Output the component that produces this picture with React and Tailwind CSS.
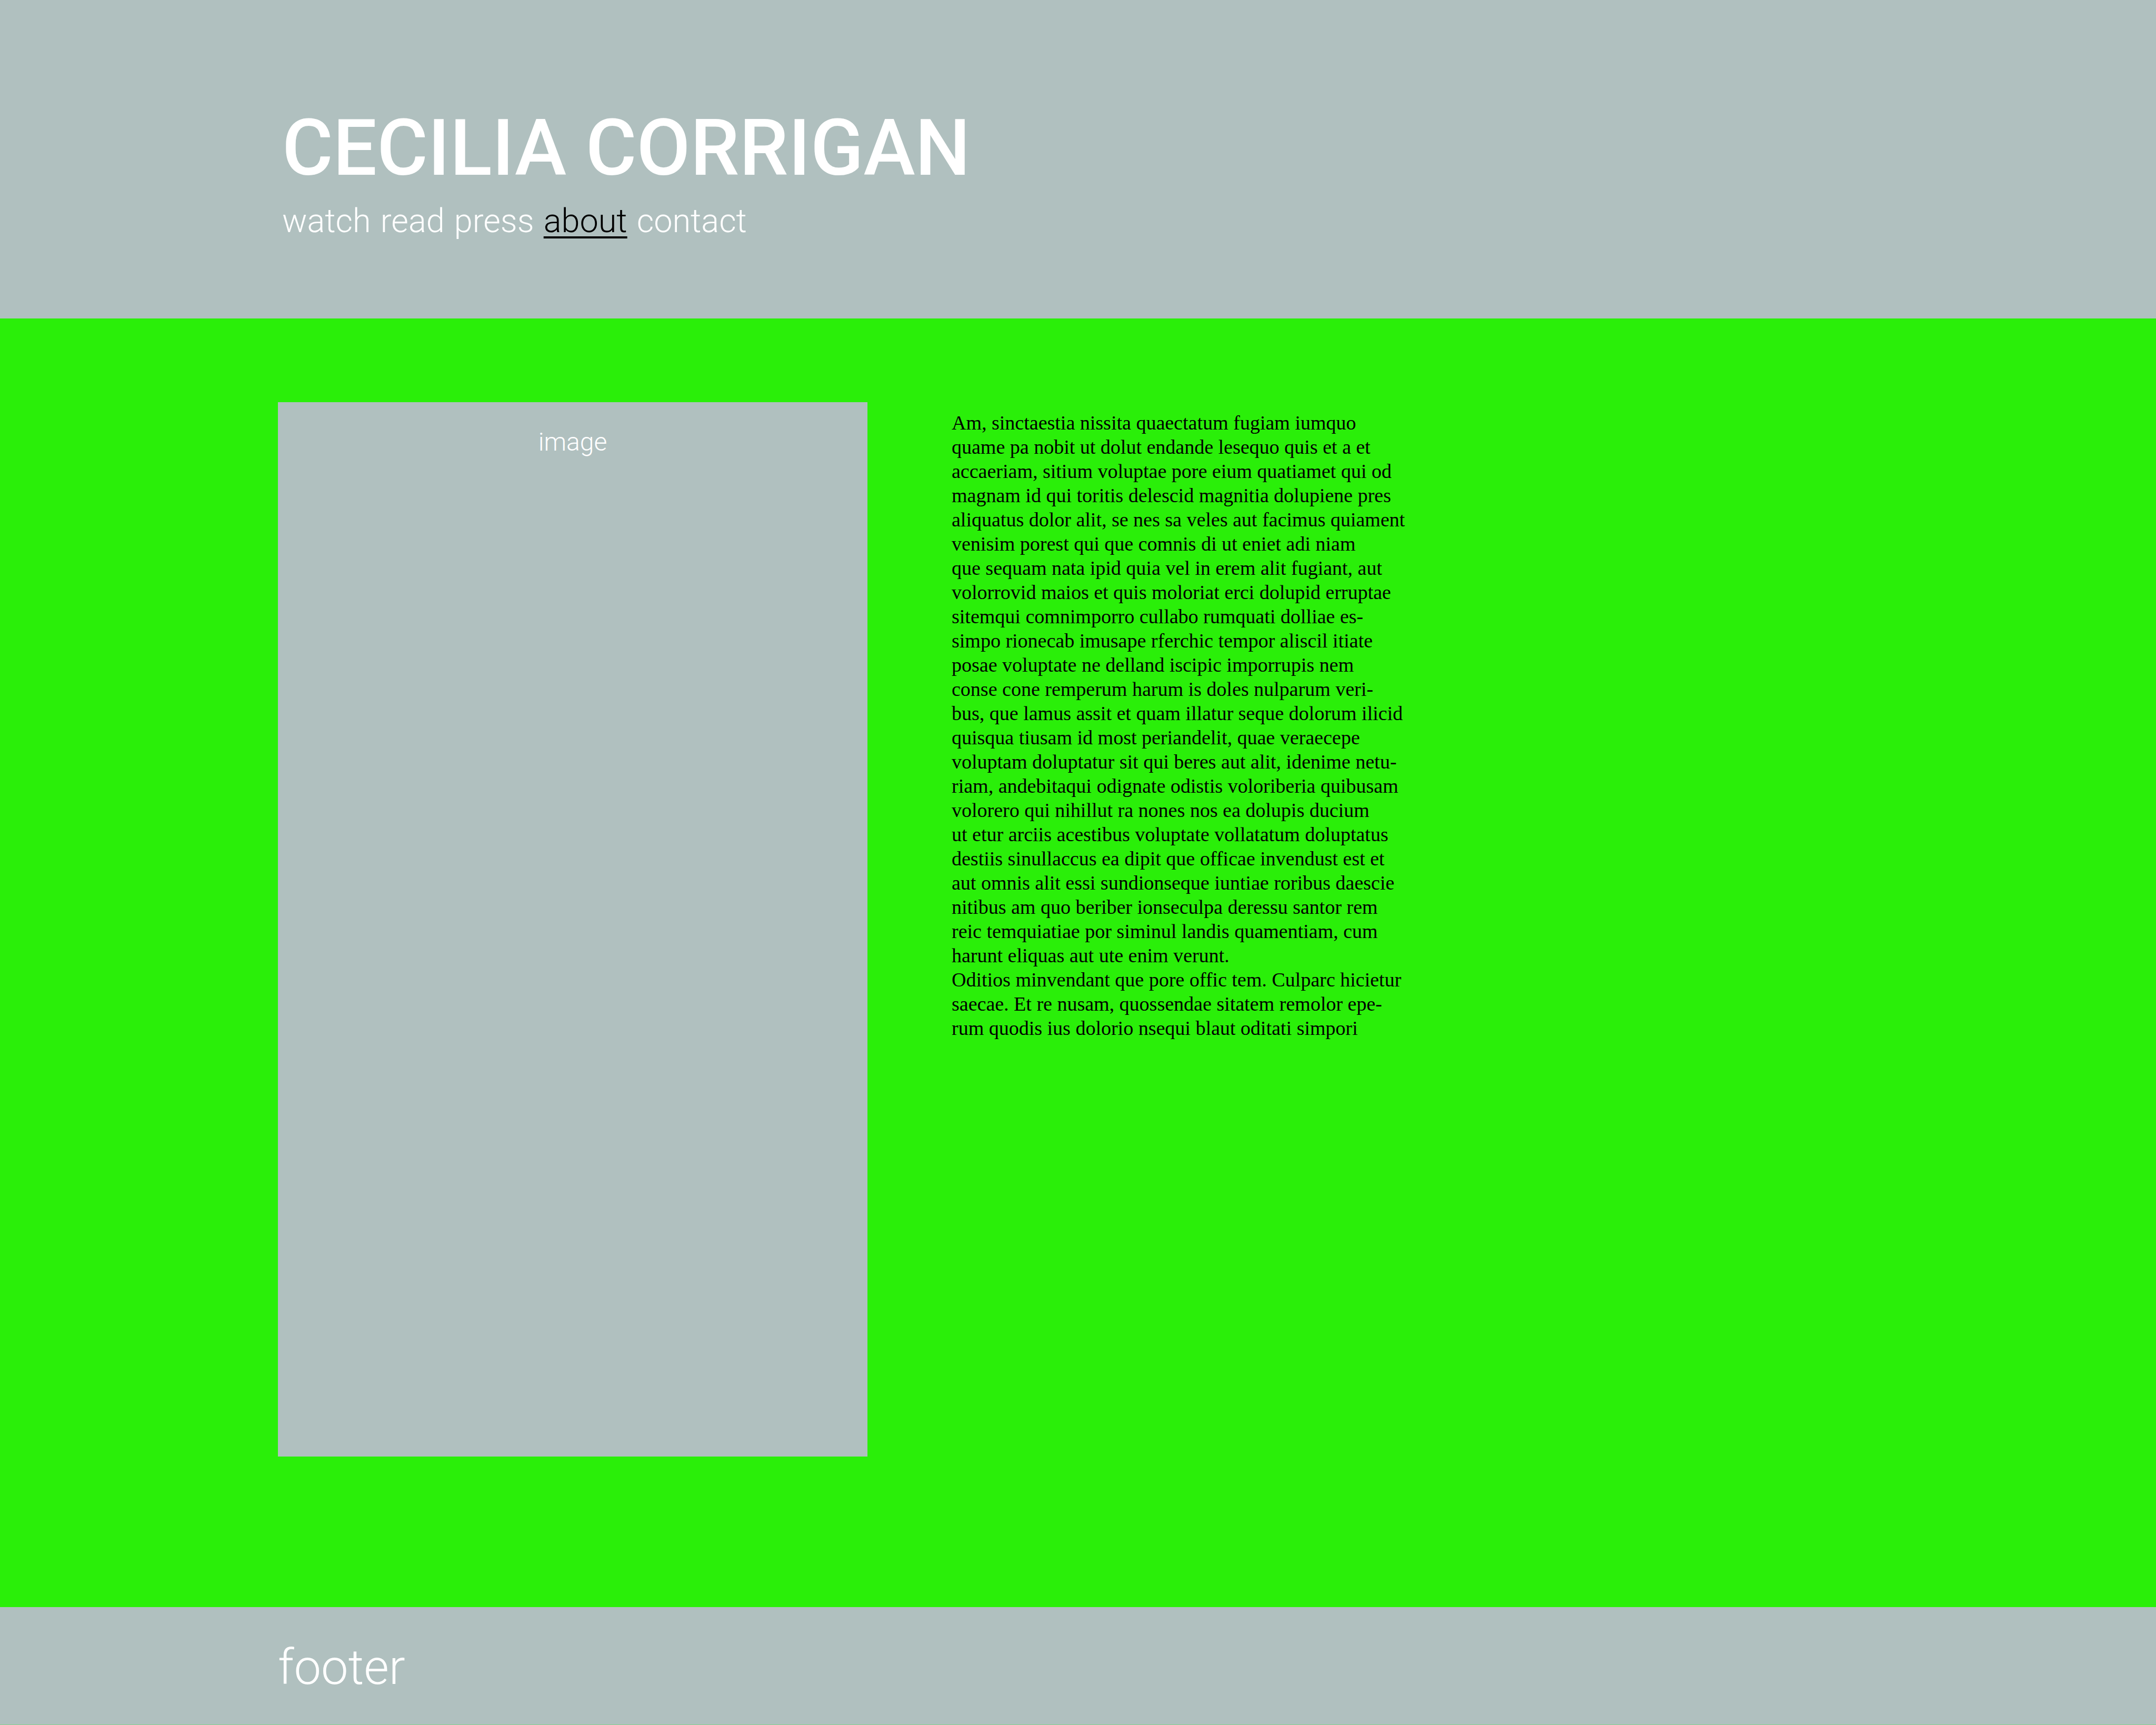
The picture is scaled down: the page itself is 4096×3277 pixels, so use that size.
const navItems = ["watch", "read", "press", "about", "contact"];
const current = "about";

const paragraphs = [
  [
    "Am, sinctaestia nissita quaectatum fugiam iumquo",
    "quame pa nobit ut dolut endande lesequo quis et a et",
    "accaeriam, sitium voluptae pore eium quatiamet qui od",
    "magnam id qui toritis delescid magnitia dolupiene pres",
    "aliquatus dolor alit, se nes sa veles aut facimus quiament",
    "venisim porest qui que comnis di ut eniet adi niam",
    "que sequam nata ipid quia vel in erem alit fugiant, aut",
    "volorrovid maios et quis moloriat erci dolupid erruptae",
    "sitemqui comnimporro cullabo rumquati dolliae es-",
    "simpo rionecab imusape rferchic tempor aliscil itiate",
    "posae voluptate ne delland iscipic imporrupis nem",
    "conse cone remperum harum is doles nulparum veri-",
    "bus, que lamus assit et quam illatur seque dolorum ilicid",
    "quisqua tiusam id most periandelit, quae veraecepe",
    "voluptam doluptatur sit qui beres aut alit, idenime netu-",
    "riam, andebitaqui odignate odistis voloriberia quibusam",
    "volorero qui nihillut ra nones nos ea dolupis ducium",
    "ut etur arciis acestibus voluptate vollatatum doluptatus",
    "destiis sinullaccus ea dipit que officae invendust est et",
    "aut omnis alit essi sundionseque iuntiae roribus daescie",
    "nitibus am quo beriber ionseculpa deressu santor rem",
    "reic temquiatiae por siminul landis quamentiam, cum",
    "harunt eliquas aut ute enim verunt.",
  ],
  [
    "Oditios minvendant que pore offic tem. Culparc hicietur",
    "saecae. Et re nusam, quossendae sitatem remolor epe-",
    "rum quodis ius dolorio nsequi blaut oditati simpori",
  ],
];

function Header() {
  return (
    <header className="bg-[#b0c0bf] pt-[194px] pb-[149px] pl-[536px] text-white">
      <h1 className="text-[148px] leading-[176px] font-medium">CECILIA CORRIGAN</h1>
      <nav className="mt-3.5 flex gap-[18px] text-[63px] leading-[72px] font-light">
        {navItems.map((item) =>
          item === current ? (
            <a
              key={item}
              href={`#${item}`}
              aria-current="page"
              className="text-black underline decoration-4 underline-offset-8"
            >
              {item}
            </a>
          ) : (
            <a key={item} href={`#${item}`}>
              {item}
            </a>
          ),
        )}
      </nav>
    </header>
  );
}

function Article() {
  return (
    <article className="pt-4 font-['Liberation_Serif',serif] text-[38px] leading-[46px] text-black">
      {paragraphs.map((lines) => (
        <p key={lines[0]}>
          {lines.map((line) => (
            <span key={line} className="block whitespace-nowrap">
              {line}
            </span>
          ))}
        </p>
      ))}
    </article>
  );
}

export default function App() {
  return (
    <div className="flex min-h-screen flex-col bg-[#2aef09] font-['Roboto',sans-serif]">
      <Header />
      <main className="flex grow items-start gap-40 pt-[159px] pb-[286px] pl-[528px]">
        <figure className="h-[2003px] w-[1120px] bg-[#b0c0bf] pt-12 text-center text-[48px] leading-[56px] font-light text-white">
          <figcaption>image</figcaption>
        </figure>
        <Article />
      </main>
      <footer className="border-b border-[#85d08c] bg-[#b0c0bf] pt-[59px] pb-[52px] pl-[528px] text-[92px] leading-[112px] font-light text-white">
        footer
      </footer>
    </div>
  );
}
